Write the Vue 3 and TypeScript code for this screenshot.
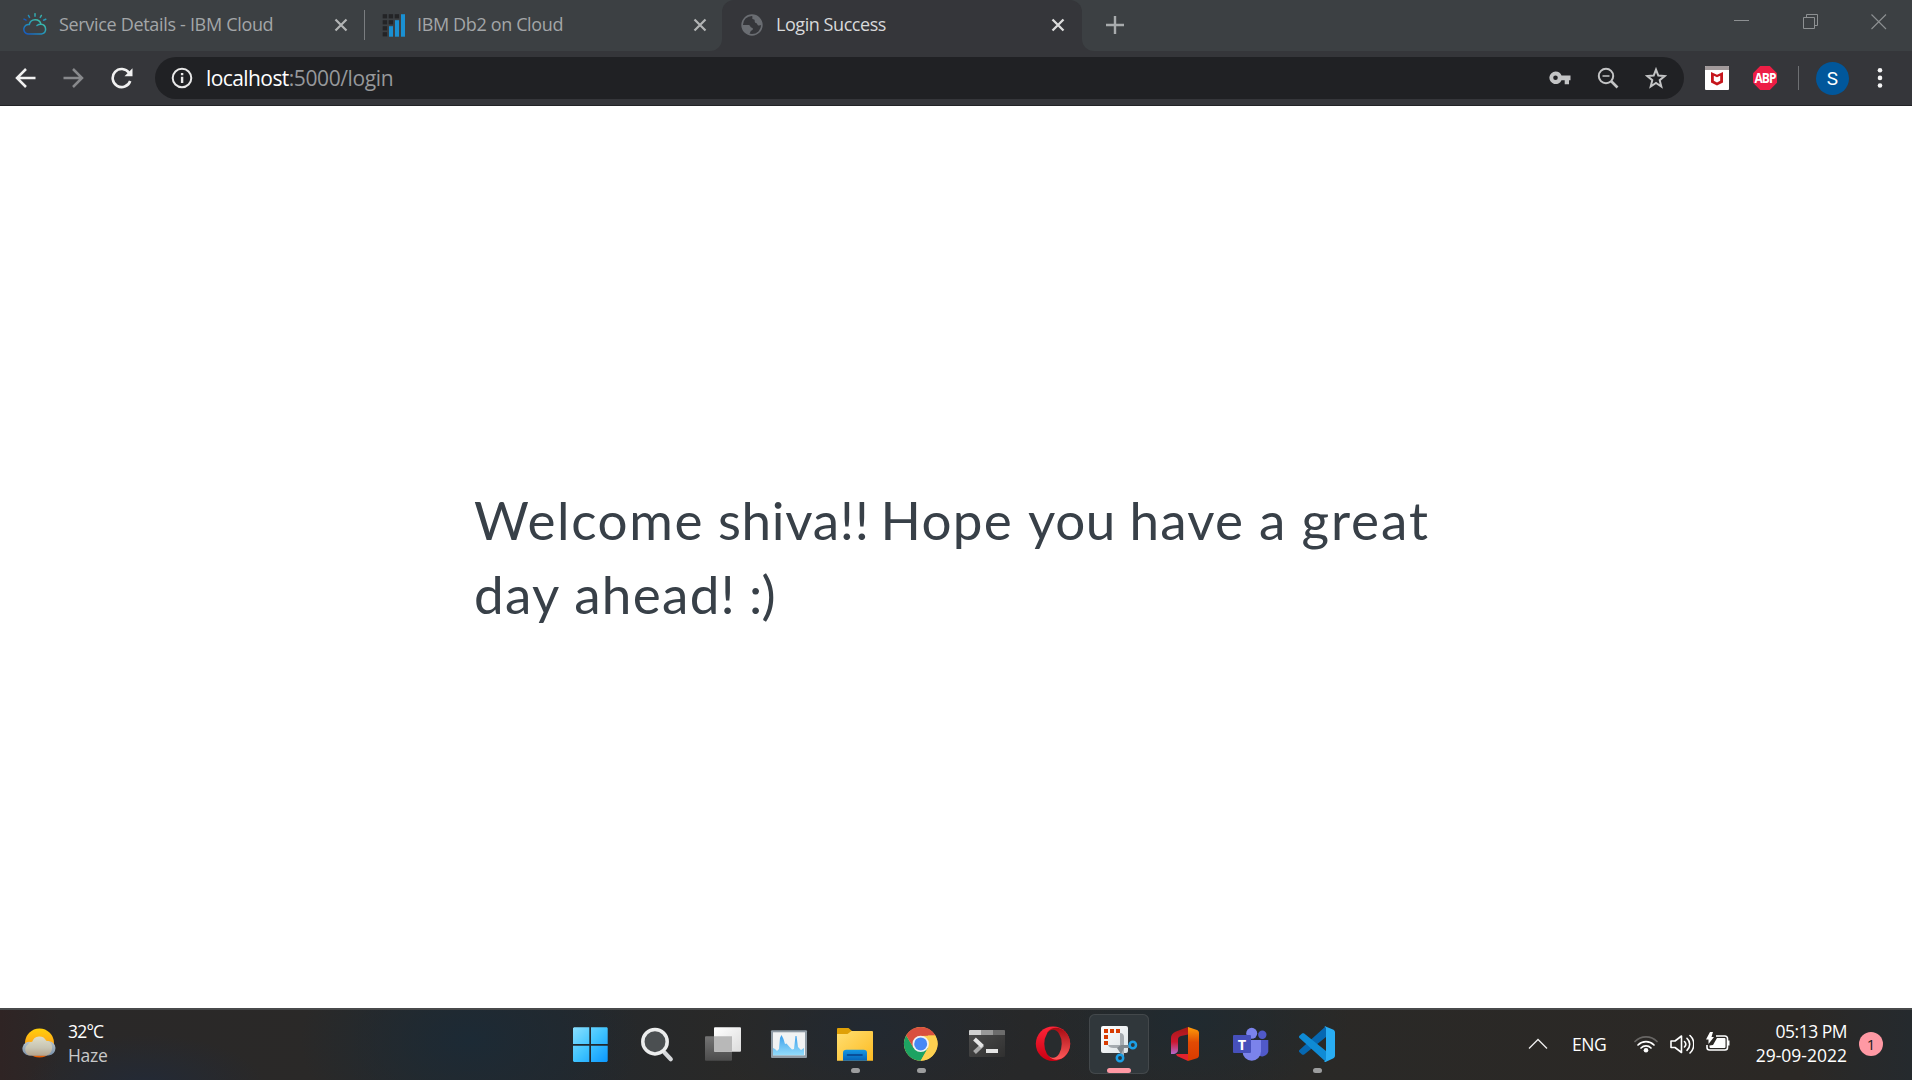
<script setup lang="ts">
interface Tab {
  id: string
  title: string
}

const background: Tab[] = [
  { id: 'cloud', title: 'Service Details - IBM Cloud' },
  { id: 'db2', title: 'IBM Db2 on Cloud' },
]

const dots: [number, number][] = [
  [0, 0], [6, 0], [12, 0],
  [0, 6], [6, 6],
  [0, 12],
  [0, 18],
]
</script>

<template>
  <div class="screen">
    <header class="strip">
      <div class="strip-left">
        <div v-for="tab in background" :key="tab.id" class="tab" :class="tab.id">
          <svg v-if="tab.id === 'cloud'" class="fav" width="24" height="24" viewBox="0 0 24 24" fill="none">
            <defs>
              <linearGradient id="cl" x1="0" y1="1" x2="1" y2="0">
                <stop offset="0" stop-color="#1553c0" />
                <stop offset=".5" stop-color="#2597b8" />
                <stop offset="1" stop-color="#4ad0a0" />
              </linearGradient>
            </defs>
            <g stroke="url(#cl)" stroke-width="1.5" stroke-linecap="round">
              <path d="M6.3 11.5a6 6 0 0 1 11.7-.3 5 5 0 0 1 .5 9.900H5a4.700 4.700 0 0 1 1.300-9.600zM14 12.500a6 6 0 0 1 4-1.300" />
              <path d="M1 6.200l2 1M5.500 2.500l1 1.900M12 .8v2.400M18.300 2.500l-1 1.900M22.800 6.200l-2.200 1" />
            </g>
          </svg>
          <svg v-else class="fav" width="24" height="24" viewBox="0 0 24 24">
            <rect v-for="([x, y]) in dots" :key="`${x}-${y}`" :x="x + 0.7" :y="y + 1.200" width="4.400" height="4.200" fill="#232426" />
            <g fill="#1a90d2">
              <rect x="7" y="13.200" width="4" height="10.500" />
              <rect x="13" y="7.200" width="4" height="16.500" />
              <rect x="19" y="1.200" width="4" height="22.500" />
            </g>
          </svg>
          <span class="title">{{ tab.title }}</span>
          <svg class="x" width="14" height="14" viewBox="0 0 14 14"><path d="M1.500 1.500l11 11M12.500 1.500l-11 11" stroke="#b2b4b5" stroke-width="2.200" /></svg>
        </div>
      </div>
      <div class="tab-wrap">
        <div class="tab current">
          <svg class="fav" width="22" height="22" viewBox="0 0 22 22">
            <circle cx="11" cy="11" r="9.900" fill="none" stroke="#6a6d72" stroke-width="1.600" />
            <path d="M12 1C10 3.500 10.500 5 13 5.600C14.500 6 12.800 8.500 15 9C16.500 9.300 16 11.500 18 11.500L21 11A10 10 0 0 0 12 1zM1.200 11H7.500C9.500 11 9 13.500 11 13.700C12.500 14 12 16.200 10.500 16.500C9 17 9.500 19 8 20.500A10 10 0 0 1 1.200 11z" fill="#6a6d72" />
            <path d="M6.500 8.500C5.500 6 8.500 3 11.500 2.500L11 6.500C10 8 8 7.500 6.500 8.500z" fill="#35363a" />
          </svg>
          <span class="title">Login Success</span>
          <svg class="x" width="14" height="14" viewBox="0 0 14 14"><path d="M1.500 1.500l11 11M12.500 1.500l-11 11" stroke="#dcdcdc" stroke-width="2.300" /></svg>
        </div>
      </div>
      <div class="strip-right">
        <svg class="plus" width="18" height="18" viewBox="0 0 18 18"><path d="M9 0v18M0 9h18" stroke="#a8abad" stroke-width="2.400" /></svg>
        <div class="win">
          <svg width="16" height="16" viewBox="0 0 16 16"><path d="M0 6.500h15" stroke="#8d9092" /></svg>
          <svg width="16" height="16" viewBox="0 0 16 16" fill="none" stroke="#8d9092"><path d="M.5 3.500h11v11H.5zM3.500 3.500v-3h11v11h-3" /></svg>
          <svg width="16" height="16" viewBox="0 0 16 16"><path d="M.5.5l14.500 14.500M15 .5L.5 15" stroke="#8d9092" stroke-width="1.100" /></svg>
        </div>
      </div>
    </header>

    <nav class="toolbar">
      <svg class="nav-icon" width="22" height="22" viewBox="0 0 22 22" fill="none" stroke="#f1f1f1" stroke-width="2.500"><path d="M20.500 11H3M11 2L2 11l9 9" /></svg>
      <svg class="nav-icon" width="22" height="22" viewBox="0 0 22 22" fill="none" stroke="#88898c" stroke-width="2.500"><path d="M.5 11H18M10 2l9 9-9 9" /></svg>
      <svg class="nav-icon" width="22" height="22" viewBox="0 0 22 22"><path d="M18 5.800A9 9 0 1 0 19.200 14" fill="none" stroke="#f1f1f1" stroke-width="2.600" /><path d="M21.500 1.200V9.200H13.500z" fill="#f1f1f1" /></svg>
      <div class="omnibox">
        <svg class="info" width="22" height="22" viewBox="0 0 22 22"><circle cx="11" cy="11" r="9.300" fill="none" stroke="#e8e8e8" stroke-width="2" /><path d="M9.900 9.800h2.400v6.200H9.900zM9.900 6h2.400v2.200H9.900z" fill="#e8e8e8" /></svg>
        <div class="url"><span class="host">localhost</span><span class="path">:5000/login</span></div>
        <div class="box-icons">
          <svg width="22" height="22" viewBox="0 0 22 22"><path fill-rule="evenodd" d="M6.500 4.500a6.300 6.300 0 0 1 6 4.100H21.500v4.600H20v4h-4.300v-4h-3.200A6.300 6.300 0 1 1 6.500 4.500zm0 4a2.300 2.300 0 1 0 0 4.600 2.300 2.300 0 0 0 0-4.600z" fill="#c3c4c5" /></svg>
          <svg width="22" height="22" viewBox="0 0 22 22" fill="none" stroke="#c3c4c5"><circle cx="9" cy="9" r="7.200" stroke-width="2" /><path d="M14 14l6.500 6.500" stroke-width="2.700" /><path d="M5.500 9h7" stroke-width="1.500" /></svg>
          <svg width="22" height="22" viewBox="0 0 22 22"><path d="M11 2.600l2.300 6 6.300.5-4.900 4.100 1.600 6.300-5.300-3.500-5.300 3.500 1.600-6.300-4.900-4.100 6.300-.5z" fill="none" stroke="#c3c4c5" stroke-width="2" /></svg>
        </div>
      </div>
      <svg class="mcafee" width="24" height="24" viewBox="0 0 24 24"><rect width="24" height="24" rx="1" fill="#fff" /><path d="M0 4V1a1 1 0 0 1 1-1h22a1 1 0 0 1 1 1v3z" fill="#a29a9b" /><path d="M6 6l6 2.800L18 6v10.500L12 19.500 6 16.500zM8.800 9.800v5L12 16.500l3.200-1.700v-5L12 11.300z" fill-rule="evenodd" fill="#c6161d" /></svg>
      <div class="abp"><span>ABP</span></div>
      <i class="rule"></i>
      <div class="avatar">S</div>
      <svg class="menu" width="6" height="22" viewBox="0 0 6 22" fill="#f5f5f5"><circle cx="3" cy="3.300" r="2.300" /><circle cx="3" cy="10.900" r="2.300" /><circle cx="3" cy="18.500" r="2.300" /></svg>
    </nav>

    <main class="page">
      <h1>
        <span class="w-welcome">Welcome</span> <span class="w-name">shiva!!</span> <span>Hope</span> <span class="w-you">you</span> <span class="w-have">have</span> <span>a</span> <span class="w-great">great</span><br />
        <span>day</span> <span class="w-ahead">ahead!</span> <span class="w-smile">:)</span>
      </h1>
    </main>

    <footer class="taskbar">
      <div class="weather">
        <svg width="34" height="34" viewBox="0 0 34 34">
          <defs>
            <linearGradient id="sun" x1="0" y1="0" x2="0" y2="1"><stop offset="0" stop-color="#ffd00a" /><stop offset=".55" stop-color="#ffa51a" /><stop offset="1" stop-color="#e85a00" /></linearGradient>
            <linearGradient id="fog" x1="0" y1="0" x2="0" y2="1"><stop offset="0" stop-color="#e0dfc9" /><stop offset=".6" stop-color="#c7c4b3" /><stop offset="1" stop-color="#b5a58d" /></linearGradient>
            <linearGradient id="fog2" x1="0" y1="0" x2="0" y2="1"><stop offset="0" stop-color="#bac6cd" /><stop offset="1" stop-color="#7890ab" /></linearGradient>
          </defs>
          <circle cx="17.500" cy="16" r="14.500" fill="url(#sun)" />
          <path d="M7 28.500a6.800 6.800 0 1 1 3-13l15-1.500a7.300 7.300 0 1 1 1.500 14.500z" fill="url(#fog2)" />
          <path d="M8.500 28.500a6 6 0 0 1-2.500-11c1-2 2.500-2.700 4.200-2.700a7.500 7.500 0 0 1 14-1c4 0 6.800 4 5.800 8.200-.8 4-3.500 6.500-6.500 6.500z" fill="url(#fog)" />
        </svg>
        <div class="stack"><span class="temp">32°C</span><span class="haze">Haze</span></div>
      </div>

      <div class="apps">
        <div class="app">
          <svg viewBox="0 0 60 60">
            <defs><linearGradient id="wn" gradientUnits="userSpaceOnUse" x1="12" y1="13" x2="47" y2="48"><stop offset="0" stop-color="#8be0ff" /><stop offset=".5" stop-color="#40c4ff" /><stop offset="1" stop-color="#0a97ff" /></linearGradient></defs>
            <path d="M13 13.300h15.300V30H12V14.300zM30 13.300h16l.7 1V30H30zM12 31.700h16.300V48H13l-1-1zM30 31.700h16.700V47l-1 1H30z" fill="url(#wn)" />
          </svg>
        </div>
        <div class="app">
          <svg viewBox="0 0 60 60"><path d="M37.500 38.500l6.300 6.800" stroke="#d6d8da" stroke-width="4.200" stroke-linecap="round" /><circle cx="28" cy="27.700" r="12.200" fill="#4b4f51" stroke="#eceded" stroke-width="3.500" /></svg>
        </div>
        <div class="app">
          <svg viewBox="0 0 60 60">
            <defs><linearGradient id="tv" x1="0" y1="0" x2="1" y2="1"><stop offset="0" stop-color="#fff" /><stop offset="1" stop-color="#dcdcdc" /></linearGradient><linearGradient id="tv2" x1="0" y1="0" x2="0" y2="1"><stop offset="0" stop-color="#747474" /><stop offset="1" stop-color="#4c4c4c" /></linearGradient></defs>
            <rect x="12" y="22.300" width="27" height="24.500" rx="1" fill="url(#tv2)" /><rect x="21" y="13.300" width="27" height="24.500" rx="1" fill="url(#tv)" /><path d="M21 22.300h18v15.500H22l-1-1z" fill="#b8b8b8" />
          </svg>
        </div>
        <div class="app">
          <svg viewBox="0 0 60 60">
            <defs><linearGradient id="pm" x1="0" y1="0" x2="0" y2="1"><stop offset="0" stop-color="#3b9eea" /><stop offset="1" stop-color="#93dcfb" /></linearGradient></defs>
            <rect x="12" y="16.300" width="36" height="27.700" rx="1" fill="#8f9ba5" /><rect x="14" y="18.300" width="32" height="23" fill="#f1f3f4" />
            <path d="M14 34l2 1 2 2 2-2 1-11 1.500-3 2 4 1.500 5 1.500-.5 3.500 4 2 2 2-.5 1.500-13h1l1.500 11 3 3 3-2v7.300H14z" fill="url(#pm)" />
          </svg>
        </div>
        <div class="app running">
          <svg viewBox="0 0 60 60">
            <defs><linearGradient id="fo" x1="0" y1="0" x2="1" y2="1"><stop offset="0" stop-color="#ffdf72" /><stop offset="1" stop-color="#fdbb22" /></linearGradient><linearGradient id="fb" x1="0" y1="0" x2="0" y2="1"><stop offset="0" stop-color="#1598e4" /><stop offset="1" stop-color="#0563b8" /></linearGradient></defs>
            <path d="M12 15a1 1 0 0 1 1-1h10.500l3.500 3v5H12z" fill="#dfa007" /><path d="M12 20h10.500l4-3H47a1 1 0 0 1 1 1v28.700H12z" fill="url(#fo)" />
            <path d="M18 46.700V39a3.300 3.300 0 0 1 3.300-3.300h17.400A3.300 3.300 0 0 1 42 39v7.700z" fill="url(#fb)" /><path d="M22.500 41h14.500" stroke="#073f88" stroke-width="1.600" stroke-linecap="round" />
          </svg>
        </div>
        <div class="app running">
          <svg viewBox="0 0 60 60">
            <circle cx="29.700" cy="29.900" r="16.800" fill="#fdd050" />
            <path d="M29.700 29.900L22.700 34 15.200 21.500A16.800 16.800 0 0 0 29.700 46.700L37 34z" fill="#1da362" />
            <path d="M15.200 21.500a16.800 16.800 0 0 1 29.100 0L29.700 22l-7 12z" fill="#d9503f" />
            <path d="M44.300 21.500A16.800 16.800 0 0 1 29.700 46.700L37 34 37 21.500z" fill="#fdd050" />
            <circle cx="29.700" cy="29.900" r="8.200" fill="#f1f1f1" /><circle cx="29.700" cy="29.900" r="6.500" fill="#4688f4" />
          </svg>
        </div>
        <div class="app">
          <svg viewBox="0 0 60 60">
            <defs><linearGradient id="tm" x1="0" y1="0" x2="1" y2="1"><stop offset="0" stop-color="#4d4d4d" /><stop offset="1" stop-color="#303030" /></linearGradient></defs>
            <rect x="12" y="16" width="36" height="27" rx="1.500" fill="url(#tm)" /><path d="M12 21v-4a1 1 0 0 1 1-1h11v5z" fill="#d0d0d0" /><path d="M24 16h12v5H24z" fill="#999" /><path d="M36 16h11a1 1 0 0 1 1 1v4H36z" fill="#6c6c6c" />
            <path d="M17.500 38.500l8-7.500" stroke="#aaa" stroke-width="4" /><path d="M17.500 25l8 7.500" stroke="#e6e6e6" stroke-width="4" /><path d="M29 35h12v4H29z" fill="#e5e5e5" />
          </svg>
        </div>
        <div class="app">
          <svg viewBox="0 0 60 60">
            <defs><linearGradient id="op" x1="0" y1="0" x2="0" y2="1"><stop offset="0" stop-color="#ff2438" /><stop offset="1" stop-color="#c90012" /></linearGradient><linearGradient id="op2" x1="0" y1="0" x2="0" y2="1"><stop offset="0" stop-color="#a70b12" /><stop offset="1" stop-color="#ff5b5b" /></linearGradient></defs>
            <ellipse cx="30" cy="29.800" rx="17.200" ry="17.300" fill="url(#op)" />
            <path d="M24 18.500C30 11 38 14 41.500 17A17.200 17.200 0 0 1 41.500 42.600C38 46 30 48 25 41z" fill="url(#op2)" />
            <ellipse cx="30" cy="29.800" rx="8.700" ry="14" fill="#282c2e" />
          </svg>
        </div>
        <div class="app focused">
          <svg viewBox="0 0 60 60">
            <defs><linearGradient id="sn" x1="0" y1="0" x2="1" y2="1"><stop offset="0" stop-color="#fff" /><stop offset="1" stop-color="#dce3e6" /></linearGradient></defs>
            <rect x="12" y="12" width="27" height="27" rx="2" fill="url(#sn)" />
            <path d="M15 15h4v4h-4zM21 15h4v4h-4zM27 15h4v4h-4zM15 21h4v4h-4zM15 27h4v4h-4z" fill="#d83b01" />
            <path d="M31 19c2.500 0 4 1.500 4 4v19h-3.500V34h-7c-3 0-5-1.200-5.500-3H31z" fill="#a5abb0" /><path d="M28 34l4-3h9v3h-6l-3 6z" fill="#7f878d" />
            <circle cx="43.800" cy="31" r="3.200" fill="none" stroke="#1b9fe6" stroke-width="2.500" /><circle cx="31" cy="44" r="3.200" fill="none" stroke="#1b9fe6" stroke-width="2.500" />
          </svg>
        </div>
        <div class="app">
          <svg viewBox="0 0 60 60">
            <defs><linearGradient id="of" x1="0" y1="0" x2="0" y2="1"><stop offset="0" stop-color="#ff9d08" /><stop offset=".45" stop-color="#e14b04" /><stop offset="1" stop-color="#d93a00" /></linearGradient><linearGradient id="og" x1="0" y1="0" x2="0" y2="1"><stop offset="0" stop-color="#a31a15" /><stop offset=".55" stop-color="#cf1830" /><stop offset="1" stop-color="#b56acb" /></linearGradient></defs>
            <path d="M33 13L21 17.500C17.500 19 16 21 16 24v16l3 0c2.500-.5 4-2 4-4V25.500c0-2 1-3 3-3.500l7-1.500z" fill="url(#og)" />
            <path d="M33 13l9 3c1.300.5 2 1.500 2 3v22c0 1.700-.7 2.700-2 3.200L33 47z" fill="url(#of)" />
            <path d="M21 40h12v7l-11-5z" fill="#e2222d" />
          </svg>
        </div>
        <div class="app">
          <svg viewBox="0 0 60 60">
            <circle cx="41.300" cy="20.800" r="4.200" fill="#5059c9" /><path d="M36 26h11.300v11.500a6.500 6.500 0 0 1-11.300 2.500z" fill="#5059c9" />
            <circle cx="30.700" cy="19.300" r="5.500" fill="#7b83eb" /><path d="M21.500 26h18.500v11.500a9.200 9.200 0 0 1-18.500 0z" fill="#7b83eb" />
            <rect x="12" y="21" width="18" height="18" rx="1" fill="#4650bb" />
            <text x="21" y="35.500" text-anchor="middle" font-family="Noto Sans, sans-serif" font-size="14.500" font-weight="700" fill="#fff">T</text>
          </svg>
        </div>
        <div class="app running">
          <svg viewBox="0 0 60 60">
            <path d="M39 12L12.500 36c-.7.700-.7 1.500 0 2.200l2.500 2.200c.7.600 1.500.6 2.200 0L39 23z" fill="#0668b2" />
            <path d="M39 48L12.500 24c-.7-.7-.7-1.500 0-2.200l2.500-2.200c.7-.6 1.500-.6 2.200 0L39 37z" fill="#0f8bd5" />
            <path d="M37.300 12l8.700 3.500c1.300.6 2 1.500 2 3v23c0 1.500-.7 2.400-2 3L38.500 48l-1.500-.5 2-1.500V14z" fill="#29adf3" />
          </svg>
        </div>
      </div>

      <div class="tray">
        <svg class="chev" width="20" height="12" viewBox="0 0 20 12"><path d="M1 10.500L10 1.500l9 9" fill="none" stroke="#eee" stroke-width="1.300" /></svg>
        <span class="lang">ENG</span>
        <svg class="wifi" width="24" height="18" viewBox="0 0 24 18" fill="none" stroke-linecap="round">
          <path d="M1 6.500a15.500 15.500 0 0 1 22 0" stroke="#686664" stroke-width="1.700" /><path d="M4 10a11.300 11.300 0 0 1 16 0M7 13a7 7 0 0 1 10 0" stroke="#fff" stroke-width="1.700" /><circle cx="12" cy="15.300" r="2.300" fill="#fff" />
        </svg>
        <svg class="vol" width="24" height="20" viewBox="0 0 24 20" fill="none" stroke="#fff" stroke-width="1.600" stroke-linejoin="round" stroke-linecap="round"><path d="M1 7v6.500h4l6.500 5V2L5 7zM14.500 7.500a4 4 0 0 1 0 5.500M17 4.300a8 8 0 0 1 0 12M20 1.500a12 12 0 0 1 0 17.500" /></svg>
        <svg class="bat" width="24" height="20" viewBox="0 0 24 20"><path d="M10 4h9a2.500 2.500 0 0 1 2.500 2.500v9A2.500 2.500 0 0 1 19 18H3.500A2.500 2.500 0 0 1 1 15.500V13" fill="none" stroke="#fff" stroke-width="1.600" /><path d="M11 6h7.500a1 1 0 0 1 1 1v8a1 1 0 0 1-1 1H4.500a1 1 0 0 1-1-1v-1.500L7 13z" fill="#fff" /><path d="M4 0L0 7.500h2.500V12L8 5H5.500L7 0z" fill="#fff" /><path d="M22 8.500h1.500v5H22z" fill="#fff" /></svg>
        <div class="clock"><span class="time">05:13 PM</span><span class="date">29-09-2022</span></div>
        <span class="badge">1</span>
      </div>
    </footer>
  </div>
</template>

<style>
body { margin: 0; background: #fff; overflow: hidden; }
</style>

<style scoped>
.screen { width: 1912px; height: 1080px; display: flex; flex-direction: column; font-family: "Open Sans", "Noto Sans", sans-serif; background: #fff; overflow: hidden; }
svg { display: block; flex: none; }
.strip { height: 51px; display: flex; background: #35363a; flex: none; }
.strip-left { width: 722px; display: flex; background: #3c4043; border-bottom-right-radius: 12px; }
.tab { display: flex; align-items: center; height: 50px; box-sizing: border-box; position: relative; white-space: nowrap; }
.cloud { width: 365px; padding-left: 23px; }
.cloud::after { content: ""; width: 1px; height: 30px; margin-left: 17px; background: #7a7d80; }
.db2 { width: 357px; padding-left: 17px; }
.title { font-size: 18px; line-height: 24px; height: 26px; color: #a3a6a8; margin-left: 12px; flex: 1; }
.cloud .title { letter-spacing: -0.32px; }
.db2 .title { letter-spacing: -0.36px; margin-left: 11px; }
.cloud .x { margin-right: -1px; }
.db2 .x { margin-right: 15px; }
.tab-wrap { width: 360px; background: #3c4043; }
.tab-wrap .current { height: 51px; padding: 0 17px 1px 19px; background: #35363a; border-radius: 12px 12px 0 0; }
.current .title { color: #d8d9da; margin-left: 13px; letter-spacing: -0.44px; }
.strip-right { flex: 1; display: flex; background: #3c4043; border-bottom-left-radius: 12px; justify-content: space-between; }
.plus { margin: 16px 0 0 24px; }
.win { display: flex; gap: 52.500px; margin: 14px 25px 0 0; }

.toolbar { height: 55px; box-sizing: border-box; display: flex; background: #35363a; border-bottom: 1px solid #222326; align-items: center; flex: none; }
.nav-icon { margin-left: 15px; margin-right: 11px; }
.nav-icon:nth-child(3) { margin-right: 22px; }
.omnibox { width: 1529px; height: 42px; border-radius: 21px; background: #202124; display: flex; align-items: center; box-sizing: border-box; padding: 0 17px 0 16px; }
.url { margin-left: 13px; font-size: 21px; line-height: 28px; flex: 1; white-space: nowrap; }
.host { color: #fff; letter-spacing: -0.58px; }
.path { color: #96989b; letter-spacing: -0.4px; }
.box-icons { display: flex; gap: 26px; }
.mcafee { margin-left: 21px; }
.abp { width: 24px; height: 24px; margin-left: 24px; background: #ed1e45; clip-path: polygon(30% 0, 70% 0, 100% 30%, 100% 70%, 70% 100%, 30% 100%, 0 70%, 0 30%); display: flex; align-items: center; justify-content: center; color: #fff; font: 700 12px/24px "Open Sans", sans-serif; letter-spacing: -0.9px; }
.abp span { transform: scaleY(1.15); }
.rule { width: 1px; height: 24px; background: #6e7073; margin-left: 21px; }
.avatar { width: 33px; height: 33px; border-radius: 50%; background: #01579b; color: #fff; text-align: center; font: 19px/33px Roboto, sans-serif; margin-left: 17px; }
.menu { margin-left: 28px; }

.page { flex: 1; background: #fff; padding: 377px 0 0 474px; box-sizing: border-box; }
h1 { margin: 0; font: 400 53px/74px Lato, "Open Sans", sans-serif; letter-spacing: 1.3px; color: #384048; white-space: nowrap; }
.w-welcome { letter-spacing: 1.6px; margin-right: -1px; }
.w-name { letter-spacing: 0.7px; margin-right: -4px; }
.w-you { letter-spacing: 0.6px; margin-right: -1.500px; }
.w-have { letter-spacing: 1.2px; }
.w-great { letter-spacing: 1.9px; }
.w-ahead { margin-right: -2px; }
.w-smile { letter-spacing: -0.8px; }

.taskbar { height: 72px; flex: none; box-sizing: border-box; border-top: 2px solid #484a4b; display: flex; position: relative; background: radial-gradient(ellipse 170px 110px at 470px 30px, #1c2a35, transparent), radial-gradient(ellipse 120px 50px at 145px 75px, #232a36, transparent), radial-gradient(ellipse 160px 90px at 870px 20px, #222931, transparent), radial-gradient(ellipse 160px 90px at 1190px 10px, #202a30, transparent), linear-gradient(90deg, #2f2424 0, #2a2828 60px, #2a2928 350px, #24282c 560px, #2a2927 760px, #272829 1030px, #2a2927 1300px, #2b2825 1800px, #252a2e 1912px); color: #fff; }
.weather { display: flex; width: 561px; padding-left: 22px; box-sizing: border-box; }
.weather > svg { margin-top: 17px; }
.stack { display: flex; flex-direction: column; margin: 9px 0 0 12px; font-size: 17.500px; line-height: 24px; }
.temp { letter-spacing: -0.8px; }
.haze { color: #c8c9c9; letter-spacing: -0.3px; }
.apps { display: flex; gap: 6px; margin-top: 4px; height: 60px; }
.app { width: 60px; height: 60px; position: relative; box-sizing: border-box; }
.app svg { width: 60px; height: 60px; }
.focused { background: #30373b; box-shadow: inset 0 0 0 1px #43484b; border-radius: 6px; }
.running::after, .focused::after { content: ""; position: absolute; left: 26px; top: 54px; width: 9px; height: 5px; border-radius: 3px; background: #9c9d9e; }
.focused::after { left: 18px; width: 24px; background: #ff99a4; }
.tray { margin-left: auto; display: flex; align-items: center; height: 68px; padding-right: 29px; font-size: 17.500px; white-space: nowrap; }
.lang { margin-left: 24px; width: 36px; letter-spacing: -0.4px; }
.wifi { margin-left: 26px; }
.vol { margin-left: 12px; }
.bat { margin-left: 12px; margin-top: -4px; }
.clock { width: 117px; display: flex; flex-direction: column; align-items: flex-end; line-height: 24px; margin-top: -2px; }
.time { letter-spacing: -0.5px; }
.date { letter-spacing: 0; }
.badge { width: 24px; height: 24px; border-radius: 50%; background: #ff99a4; color: #1c1c1c; font-size: 15px; line-height: 24px; text-align: center; margin-left: 12px; }
</style>
